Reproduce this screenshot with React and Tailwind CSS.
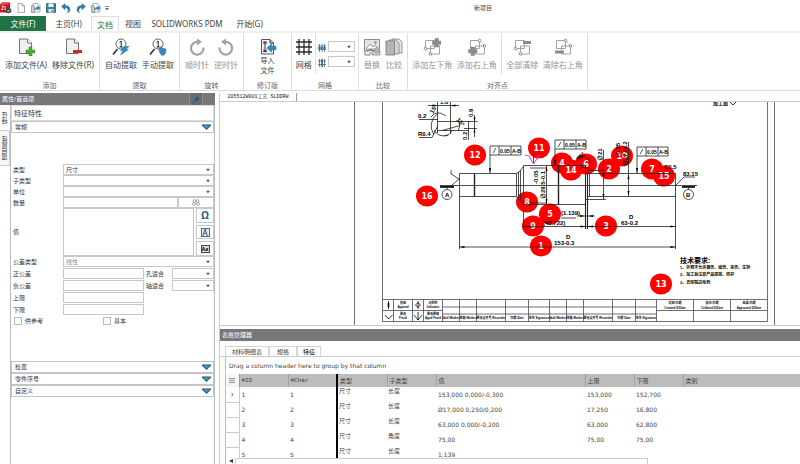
const quickIcons = [
  { name: 'SOLIDWORKS Inspection', icon: <LogoIcon /> },
  { name: '新建', icon: <NewIcon /> },
  { name: '打开', icon: <OpenIcon /> },
  { name: '保存', icon: <SaveIcon /> },
  { name: '撤消', icon: <UndoIcon /> },
  { name: '重做', icon: <UndoIcon flip /> },
  { name: '导出', icon: <OpenIcon /> },
]

const rows = [
  ['1', '1', '尺寸', '长度', '153,000 0,000/-0,300', '153,000', '152,700'],
  ['2', '2', '尺寸', '长度', 'Ø17,000 0,250/0,200', '17,250', '16,800'],
  ['3', '3', '尺寸', '长度', '63,000 0,000/-0,200', '63,000', '62,800'],
  ['4', '4', '尺寸', '角度', '75,00', '75,00', '75,00'],
  ['5', '5', '尺寸', '长度', '1,139', '', ''],
]

const balloons = [
  [12, 475, 155], [11, 539, 148], [4, 562, 163], [14, 571, 170], [6, 586, 164], [2, 609, 169],
  [10, 622, 156], [7, 652, 169], [15, 664, 176], [16, 427, 196], [8, 527, 202], [5, 550, 214],
  [9, 533, 226], [3, 606, 226], [1, 541, 246], [13, 661, 284],
]

function LogoIcon() {
  return (
    <svg viewBox="0 0 12 12" className="size-3">
      <path d="M0 2.500 2 .5h8v8l-2 2H0z" fill="#c4161c" />
      <path d="M0 2.500 2 .5h8L8 2.500z" fill="#e8474b" />
      <path d="M1.500 4h2L1.500 7.500h2M5 4v3.500h1.500" stroke="#fff" strokeWidth=".9" fill="none" />
      <circle cx="8.500" cy="8.500" r="2.800" fill="#444" />
      <path d="M7.200 8.500l1 1 1.600-2" stroke="#fff" strokeWidth=".8" fill="none" />
    </svg>
  )
}

function NewIcon() {
  return (
    <svg viewBox="0 0 12 12" className="size-3">
      <path d="M3 1.500h4l2.500 2.500v6.500H3zM7 1.500V4h2.500" fill="#fafafa" stroke="#8a8a8a" strokeWidth=".7" />
    </svg>
  )
}

function OpenIcon() {
  return (
    <svg viewBox="0 0 12 12" className="size-3">
      <path d="M3 1.500h5L10 3.500V10H3z" fill="#fff" stroke="#888" strokeWidth=".7" />
      <path d="M1.500 3.500h2l1 1v6h-3z" fill="#c9c9c9" stroke="#777" strokeWidth=".6" />
      <path d="M4.500 8.500c0-2.500 1.500-3.500 3-3.500V3l3 3-3 3V7C6.500 7 5.500 7.500 4.500 8.500z" fill="#3b87b0" />
    </svg>
  )
}

function SaveIcon() {
  return (
    <svg viewBox="0 0 12 12" className="size-3">
      <path d="M1.500 1.500h9v9h-9z" fill="#3c7fa6" stroke="#1f5576" strokeWidth=".7" />
      <path d="M3.500 1.500h5v3.500h-5z" fill="#fff" />
      <path d="M3.500 7h5v3.500h-5z" fill="#dfe8ee" />
      <path d="M6.500 8h1v2h-1z" fill="#1f5576" />
    </svg>
  )
}

function UndoIcon({ flip }) {
  return (
    <svg viewBox="0 0 12 12" className={flip ? 'size-3 -scale-x-100' : 'size-3'}>
      <path d="M1.500 4.500 5 1.500v2c3 0 5 1.200 5 4 0 1.500-1 2.700-2.500 3.200C8.200 9.500 8.400 8.500 8 7.500 7.500 6.200 6.500 5.800 5 5.800v2z" fill="#2f7ba8" stroke="#1f5e86" strokeWidth=".4" />
    </svg>
  )
}

function PageIcon({ remove }) {
  return (
    <svg viewBox="0 0 18 18" className="size-[18px]">
      <path d="M2.500 1h8l4 4v10.500h-12z" fill="#f0f0f0" stroke="#666" strokeWidth=".9" />
      <path d="M10.500 1v4h4" fill="#fff" stroke="#666" strokeWidth=".9" />
      {remove
        ? <path d="M9 12h9v3H9z" fill="#d9241c" />
        : <path d="M12 9h3v3h3v3h-3v3h-3v-3H9v-3h3z" fill="#4caf2f" stroke="#2e7d1c" strokeWidth=".5" />}
    </svg>
  )
}

function ExtractIcon({ manual }) {
  return (
    <svg viewBox="0 0 18 18" className="size-[18px]">
      <path d="M1 16.500 5.500 11" stroke="#333" strokeWidth="1.600" />
      <circle cx="9" cy="6" r="5" fill="#fff" stroke="#555" strokeWidth=".9" />
      <path d="M7.500 4.500 9.200 3v6M7.500 9h3.400" stroke="#222" strokeWidth="1" fill="none" />
      {manual
        ? <path d="M10 11.500c0-1 1-1 1.500 0V9c.3-1 1.300-1 1.400 0v1.500c.3-.8 1.300-.7 1.400.2.400-.6 1.300-.4 1.300.4.500-.5 1.400-.2 1.400.6 0 2.300-.6 4.800-2.500 5.500h-2C11 15.500 10 13.500 10 11.500z" fill="#2d8cbe" stroke="#1b5e86" strokeWidth=".4" />
        : <path d="M12 8.500h5l-3 3h2.500L8.500 17l2.500-4.200H8.500z" fill="#2d8cbe" stroke="#1b5e86" strokeWidth=".4" />}
    </svg>
  )
}

function RotateIcon({ ccw }) {
  return (
    <svg viewBox="0 0 18 18" className={ccw ? 'size-[18px] -scale-x-100' : 'size-[18px]'}>
      <path d="M15.500 9.500a6.300 6.300 0 1 1-5.500-5.500" fill="none" stroke="#a3a3a3" strokeWidth="2.200" />
      <path d="M9 .5v7l5-3.700z" fill="#a3a3a3" />
    </svg>
  )
}

function ImportIcon() {
  return (
    <svg viewBox="0 0 18 18" className="size-[18px]">
      <path d="M2.500 1.500h8.500l3.500 3.500v11h-12z" fill="#f2f2f2" stroke="#444" strokeWidth=".9" />
      <path d="M11 1.500V5h3.500M4 4h4M4 13.500h4M6 4v9.500M4.500 6 6 4.200 7.500 6M4.500 11.500 6 13.300l1.500-1.800" fill="none" stroke="#333" strokeWidth="1" />
      <path d="M8 10l4.500-4v2.300H17v3.400h-4.500V14z" fill="#2d8cbe" stroke="#1b5e86" strokeWidth=".5" />
    </svg>
  )
}

function GridIcon() {
  return (
    <svg viewBox="0 0 18 18" className="size-[18px]">
      <path d="M1 4h16M1 9h16M1 14h16M4 1v16M9 1v16M14 1v16" stroke="#2b2b2b" strokeWidth="1.300" />
    </svg>
  )
}

function SmallGridIcon({ vertical }) {
  return (
    <svg viewBox="0 0 8 8" className="size-2 shrink-0">
      <path d={vertical ? 'M3 0h2v8H3z' : 'M0 3h8v2H0z'} fill="#38b0e8" />
      <path d="M0 2h8M0 5.500h8M1.500 0v8M4 0v8M6.500 0v8" stroke="#44525c" strokeWidth=".7" />
    </svg>
  )
}

function ReplaceIcon() {
  return (
    <svg viewBox="0 0 18 18" className="size-[18px]">
      <path d="M1.500 1.500h15v11h-15z" fill="#e3e3e3" stroke="#8a8a8a" strokeWidth="1" />
      <path d="M3 11l4-5 3 3 2-2 3.500 4z" fill="#fff" stroke="#8a8a8a" strokeWidth=".8" />
      <circle cx="12.500" cy="4.500" r="1.200" fill="#8a8a8a" />
      <path d="M2 12v5h5v-3M4 14l4-3 3 2.500" fill="none" stroke="#777" strokeWidth="1" />
      <path d="M9 13h8v4H9z" fill="#c9c9c9" stroke="#888" strokeWidth=".8" />
      <circle cx="14" cy="12" r="2.500" fill="#bbb" stroke="#888" strokeWidth=".7" />
    </svg>
  )
}

function CompareIcon() {
  return (
    <svg viewBox="0 0 18 18" className="size-[18px]">
      <path d="M7 1h7l3 3v11H7z" fill="#e6e6e6" stroke="#8a8a8a" strokeWidth=".9" />
      <path d="M4 2h7l3 3v11H4z" fill="#d6d6d6" stroke="#8a8a8a" strokeWidth=".9" />
      <path d="M1 3h8.500v14H1z" fill="#b5b5b5" stroke="#808080" strokeWidth=".9" />
    </svg>
  )
}

function AlignIcon({ upper, clear }) {
  return (
    <svg viewBox="0 0 18 18" className="size-[18px]">
      <path d="M2.500 2.500h9v8h-9zM7.500 8h9v8h-9z" fill="none" stroke="#9a9a9a" strokeWidth=".9" />
      {upper
        ? <path d="M11.500 2.500 17 8" stroke="#9a9a9a" strokeWidth=".8" strokeDasharray="1.500 1" />
        : <path d="M2.500 10.500 7.500 16" stroke="#9a9a9a" strokeWidth=".8" strokeDasharray="1.500 1" />}
      <g fill="#fff" stroke="#808080" strokeWidth=".9">
        <circle cx={upper ? 11.5 : 2.5} cy={upper ? 2.5 : 10.5} r="1.300" />
        <circle cx={upper ? 16.5 : 7.5} cy={upper ? 8 : 16} r="1.300" />
      </g>
      {clear
        ? <path d={upper ? 'M1 12.500h9v3H1z' : 'M10 3h8v3h-8z'} fill="#8c8c8c" />
        : <path d={upper ? 'M3 9h3.500v2.500H9V15H6.500v2.500H3V15H.5v-3.500H3z' : 'M12 .5h3.500V3H18v3.500h-2.500V9H12V6.500H9.500V3H12z'} fill="#8c8c8c" stroke="#777" strokeWidth=".4" />}
    </svg>
  )
}

function Arrow() {
  return (
    <svg viewBox="0 0 4 3" className="pointer-events-none absolute top-1/2 right-1 h-[3px] w-1 -translate-y-1/2">
      <path d="M0 0h4L2 3z" fill="#555" />
    </svg>
  )
}

function Select({ label, id, options = [''], className = '', muted }) {
  return (
    <div className={`relative ${className}`}>
      <select id={id} aria-label={label} className={`block size-full appearance-none border border-[#c8c8c8] bg-white pl-[2px] text-[6px] leading-2 ${muted ? 'text-[#888]' : 'text-[#333]'}`}>
        {options.map(o => <option key={o}>{o}</option>)}
      </select>
      <Arrow />
    </div>
  )
}

function Group({ title, className, children }) {
  return (
    <section className={`flex shrink-0 flex-col border-r border-[#dedede] ${className}`}>
      <div className="flex min-h-0 flex-1 justify-evenly">{children}</div>
      <h2 className="h-2 text-center text-[7px] leading-2 text-[#666]">{title}</h2>
    </section>
  )
}

function Tool({ icon, children, disabled, lines }) {
  return (
    <button disabled={disabled} className={`flex flex-col items-center pt-[5px] whitespace-nowrap ${lines ? 'text-[7px]' : 'gap-1 text-[8px]'} leading-[10px] ${disabled ? 'text-[#949494]' : 'text-[#444]'}`}>
      {icon}
      {lines ? lines.map(l => <span key={l}>{l}</span>) : <span>{children}</span>}
    </button>
  )
}

function Ribbon() {
  return (
    <div className="flex h-[58px] shrink-0 border-b border-[#dcdcdc] bg-white">
      <Group title="添加" className="w-[100px]">
        <Tool icon={<PageIcon />}>添加文件(A)</Tool>
        <Tool icon={<PageIcon remove />}>移除文件(R)</Tool>
      </Group>
      <Group title="提取" className="w-20">
        <Tool icon={<ExtractIcon />}>自动提取</Tool>
        <Tool icon={<ExtractIcon manual />}>手动提取</Tool>
      </Group>
      <Group title="旋转" className="w-16">
        <Tool disabled icon={<RotateIcon />}>顺时针</Tool>
        <Tool disabled icon={<RotateIcon ccw />}>逆时针</Tool>
      </Group>
      <Group title="修订版" className="w-12">
        <Tool icon={<ImportIcon />} lines={['导入', '文件']} />
      </Group>
      <Group title="网格" className="w-[67px]">
        <Tool icon={<GridIcon />}>网格</Tool>
        <div className="mb-2 flex flex-col gap-1 border-l border-[#dedede] pt-2 pl-[2px]">
          <div className="flex items-end gap-[2px]">
            <SmallGridIcon />
            <Select label="行" className="h-[11px] w-[27px]" />
          </div>
          <div className="flex items-end gap-[2px]">
            <SmallGridIcon vertical />
            <Select label="列" className="h-[11px] w-[27px]" />
          </div>
        </div>
      </Group>
      <Group title="比较" className="w-[49px]">
        <Tool disabled icon={<ReplaceIcon />}>替换</Tool>
        <Tool disabled icon={<CompareIcon />}>比较</Tool>
      </Group>
      <Group title="对齐点" className="w-[180px]">
        <Tool disabled icon={<AlignIcon />}>添加左下角</Tool>
        <Tool disabled icon={<AlignIcon upper />}>添加右上角</Tool>
        <div className="mb-2 border-l border-[#dedede]" />
        <Tool disabled icon={<AlignIcon clear />}>全部清除</Tool>
        <Tool disabled icon={<AlignIcon upper clear />}>清除右上角</Tool>
      </Group>
    </div>
  )
}

function Section({ title }) {
  return (
    <button className="flex h-3 w-full items-center justify-between border border-[#c4c4c4] bg-white pr-[2px] pl-[3px] text-[6px] leading-2 text-[#333]">
      <span>{title}</span>
      <svg viewBox="0 0 9 6" className="h-[6px] w-[9px]">
        <path d="M0 .5h9v1L4.500 6 0 1.500z" fill="#1b5a80" />
        <path d="M1.500 1.500h6L4.500 4.500z" fill="#4a9cc4" />
      </svg>
    </button>
  )
}

function Field({ label, id, children, tall }) {
  return (
    <div className={`flex items-stretch ${tall ? 'h-12' : 'h-[11px]'}`}>
      <label htmlFor={id} className="flex w-[52px] shrink-0 items-center pl-[2px]">{label}</label>
      {children}
    </div>
  )
}

function PropertyPanel() {
  const box = 'border border-[#c8c8c8] bg-white'
  return (
    <aside className="flex w-[215px] shrink-0 flex-col text-[6px] leading-2 text-[#333]">
      <header className="flex h-3 shrink-0 items-center bg-[#777] pl-[2px] text-white">
        <h2 className="flex-1">属性/首选项</h2>
        <button aria-label="固定" className="flex h-full w-[14px] items-center justify-center border-x border-[#8c8c8c] bg-[#6b6b6b]">
          <svg viewBox="0 0 8 8" className="size-[7px]">
            <path d="M4.500 0 8 3.500l-1 .3-1.500 1.700-.3 1.500L1 2.800l1.500-.3L4.200 1z" fill="#1d5f94" />
            <path d="M3 5 .5 7.500" stroke="#173d5c" strokeWidth=".9" />
          </svg>
        </button>
        <span className="w-3" />
      </header>
      <div className="flex min-h-0 flex-1">
        <nav className="flex w-[10px] shrink-0 flex-col bg-white text-[6px]">
          <button className="flex h-[25px] items-center justify-center">
            <span className="rotate-180 [writing-mode:vertical-rl]">特征</span>
          </button>
          <button className="flex h-9 items-center justify-center border-y border-r border-[#ccc] bg-[#f7f7f7]">
            <span className="rotate-180 [writing-mode:vertical-rl]">项目属性</span>
          </button>
        </nav>
        <div className="flex-1 border-x border-[#bbb]">
          <h3 className="h-4 border border-[#ddd] pl-[2px] text-[7px] leading-4">特征特性</h3>
          <Section title="常规" />
          <form className="h-[228px] pt-[31px]">
            <Field label="类型" id="type"><Select id="type" options={['尺寸']} className="flex-1" /></Field>
            <Field label="子类型" id="subtype"><Select id="subtype" className="flex-1" /></Field>
            <Field label="单位" id="unit"><Select id="unit" className="flex-1" /></Field>
            <Field label="数量" id="qty">
              <input id="qty" className={`${box} min-w-0 flex-1`} />
              <button type="button" aria-label="数量选项" className={`${box} flex w-9 items-center justify-center`}>
                <svg viewBox="0 0 8 7" className="h-[7px] w-2" fill="none" stroke="#888" strokeWidth=".7">
                  <circle cx="2.500" cy="2" r="1.400" /><circle cx="5.500" cy="2" r="1.400" />
                  <circle cx="2" cy="5" r="1.500" /><circle cx="6" cy="5" r="1.500" />
                </svg>
              </button>
            </Field>
            <Field label="值" id="value" tall>
              <textarea id="value" className={`${box} min-w-0 flex-1 resize-none`} />
              <div className="flex w-5 flex-col gap-[2px] pl-[2px]">
                <button type="button" className={`${box} flex-1 text-[10px] leading-3 font-bold text-[#24597d]`}>Ω</button>
                <button type="button" className={`${box} flex flex-1 items-center justify-center`}>
                  <span className="size-[9px] border border-[#2d7399] bg-[#e3eff6] text-center text-[8px] leading-[7px] text-[#222]">A</span>
                </button>
                <button type="button" className={`${box} flex flex-1 items-center justify-center`}>
                  <span className="h-2 w-[9px] border border-[#444] bg-[#ddd] text-center text-[5px] leading-[6px] font-bold text-black">Aa</span>
                </button>
              </div>
            </Field>
            <Field label="公差类型" id="tol"><Select id="tol" options={['线性']} className="flex-1" muted /></Field>
            <div className="mt-[1px] flex flex-col gap-[1px]">
              <Field label="正公差" id="plus">
                <input id="plus" className={`${box} w-[81px]`} />
                <label htmlFor="hole" className="w-7 self-center pl-[2px]">孔适合</label>
                <Select id="hole" className="flex-1" />
              </Field>
              <Field label="负公差" id="minus">
                <input id="minus" className={`${box} w-[81px]`} />
                <label htmlFor="shaft" className="w-7 self-center pl-[2px]">轴适合</label>
                <Select id="shaft" className="flex-1" />
              </Field>
              <Field label="上限" id="upper"><input id="upper" className={`${box} w-[81px]`} /></Field>
              <Field label="下限" id="lower"><input id="lower" className={`${box} w-[81px]`} /></Field>
            </div>
            <div className="mt-[2px] flex pl-[3px]">
              <label className="flex w-[89px] items-center gap-[3px]">
                <input type="checkbox" className="size-2 appearance-none border border-[#bbb]" />供参考
              </label>
              <label className="flex items-center gap-[3px]">
                <input type="checkbox" className="size-2 appearance-none border border-[#bbb]" />基本
              </label>
            </div>
          </form>
          <Section title="检查" />
          <Section title="零件序号" />
          <Section title="自定义" />
        </div>
      </div>
    </aside>
  )
}

function Tolerance({ x, y, drop }) {
  return (
    <g>
      <path d={`M${x} ${drop}V${y}h31v9h-31M${x + 9} ${y}v9M${x + 21} ${y}v9M${x + 3} ${y + 7}l3-5`} />
      <path d={`M${x - 1} ${drop - 5}h2l-1 5z`} fill="#000" stroke="none" />
      <g fill="#000" stroke="none">
        <text x={x + 10} y={y + 7} fontSize="5">0.05</text>
        <text x={x + 22} y={y + 7} fontSize="5">A-B</text>
      </g>
    </g>
  )
}

function Drawing() {
  const signCells = [['标记 Marker', 451], ['处数 Marker', 468], ['更改文件号 Recorder', 491], ['日期 Date', 517], ['签名 Signature', 539], ['标记 Marker', 558], ['处数 Marker', 575], ['更改文件号 Recorder', 598], ['日期 Date', 624], ['签名 Signature', 646]]
  return (
    <svg viewBox="220 102 580 223" className="block w-full bg-white font-['Liberation_Sans_Narrow','Liberation_Sans','Noto_Sans_CJK_SC',sans-serif] font-bold">
      <g fill="#f00">
        {balloons.map(([n, x, y]) => <ellipse key={n} cx={x} cy={y} rx="11" ry="10.500" />)}
      </g>

      <g fill="#fff" fontSize="8" textAnchor="middle" className="font-['DejaVu_Sans',sans-serif]">
        {balloons.map(([n, x, y]) => <text key={n} x={x} y={y + 3}>{n}</text>)}
      </g>

      {/* sheet frame and title block */}
      <g fill="none" stroke="#4a4a58" strokeWidth=".8">
        <path d="M354.500 102v223M774.500 102v223M382.500 102v219.500h385V102M382.500 299.500h385" />
        <path d="M382.500 310.500h60M656.500 310.500h111M442.500 307h214M442.500 314h214" />
        <path d="M393.500 299.500v22M412.500 299.500v22M423.500 299.500v22M442.500 299.500v22M459.500 299.500v22M476.500 299.500v22M505.500 299.500v22M528.500 299.500v22M549.500 299.500v22M566.500 299.500v22M583.500 299.500v22M612.500 299.500v22M635.500 299.500v22M656.500 299.500v22M693.500 299.500v22M730.500 299.500v22" />
      </g>
      <g fill="none" stroke="#000" strokeWidth=".8">
        <path d="M388.500 301v8M385 315l3.500 4 4-4M418 301v8M415.500 305l2.500-2.500 2.500 2.500-2.500 2.500zM414 315l4 5 4-5M418 312v8" />
        <path d="M388.500 303v4" strokeWidth="1.600" />
      </g>
      <g fontSize="3" textAnchor="middle">
        <text x="403" y="304">借用</text><text x="403" y="308">Append</text>
        <text x="433" y="304">识别符</text><text x="433" y="308">Indicator</text>
        <text x="403" y="315">更改</text><text x="403" y="319">Fixed</text>
        <text x="433" y="315">更改更换</text><text x="433" y="319">Aged Fixed</text>
        <text x="675" y="304">绘制/日期</text><text x="675" y="309">Created D/Date</text>
        <text x="712" y="304">校对/日期</text><text x="712" y="309">Collated D/Date</text>
        <text x="749" y="304">批准/日期</text><text x="749" y="309">Approved D/Date</text>
        {signCells.map(([t, x]) => <text key={x} x={x} y="319">{t}</text>)}
      </g>

      {/* part outline */}
      <g fill="none" stroke="#222" strokeWidth=".8">
        <path d="M440 185.500h257" />
        <path d="M459.500 249V173.500h57l4-3 3.500-5h61.500v39h-62l-3.500-4-4-4h-56.500" />
        <path d="M516.500 173.500v23M518.500 172v26M520.500 170v30M523.500 165.500V229M588 173.500h87.500V249M588 196.500h87.500" />
        <path d="M474.500 173.500v23M558.500 165.500v39" strokeWidth="1.400" />
        <path d="M585.500 165.500V229M587.500 170v59" strokeWidth="1.100" />
        <path d="M589.500 173.500v23" />
        <path d="M546.500 166v38M530 203h17M530 168h16M603.500 150v49M586 199.500h20M589 170.500h15M628.500 142v54" />
        <path d="M459.500 247h216M523.500 226.500h152M577 216h18M561 218h15" />
        <path d="M451 170v4l8 5-8 7M440 186.500h14M447 187v2M682 186.500h13M688.500 187v2M676 185l8-8M684 177h11" />
        <circle cx="447" cy="194.500" r="5" /><circle cx="688.500" cy="194.500" r="5" />
        <path d="M533.500 150v13M576 160q9-9 15 3M579 169q6-4 12 1" />
        <Tolerance x={490} y={146} drop={173} />
        <Tolerance x={555} y={140} drop={165} />
        <Tolerance x={637} y={147} drop={173} />
      </g>
      <path d="M440 187h14M682 187h13" stroke="#000" strokeWidth="1.300" />
      <path d="M525 155l4 1 4.500 8 6-9" fill="none" stroke="#e23be2" />

      {/* groove detail */}
      <g fill="none" stroke="#222" strokeWidth=".8">
        <path d="M428 105.500h31M437.500 102v31M450.500 102v32M419 119.500h19M419 137.500h13l6-12M437.500 121.500h40M464 128.500h13M437.500 130.500h31M474.500 115v22M468.500 121v19M442 130.500l18-5" />
        <path d="M431 117q6-8 15-1M434 135q-7-12 3-21M434 130q4 8 14 5M459 121q2 5-1 10M444 136q6 0 8-6" />
      </g>

      <path fill="#000" d="M459.500 247l5-1v2zM675.500 247l-5-1v2zM523.500 226.500l5-1v2zM585.500 226.500l-5-1v2zM588 226.500l5-1v2zM675.500 226.500l-5-1v2zM546.500 166l-1 5h2zM546.500 204l-1-5h2zM603.500 171l-1 5h2zM603.500 199l-1-5h2zM628.500 174l-1 5h2zM628.500 196l-1-5h2zM437.500 105.500l-5-1v2zM450.500 105.500l5-1v2zM585 216l-5-1v2zM588 216l5-1v2zM474.500 121.500l-1-4h2zM474.500 128.500l-1 4h2z" />

      <g fontSize="6">
        <text x="440" y="104">1.0</text>
        <text x="418" y="118">0.2</text>
        <text x="418" y="136">R0.4</text>
        <text transform="translate(433 114) rotate(-60)">15°</text>
        <text transform="translate(456 120) rotate(50)">15°</text>
        <text transform="translate(473 117) rotate(-90)">0.9</text>
        <text transform="translate(467 140) rotate(-90)">0.2</text>
        <text transform="translate(545 199) rotate(-90)">∅29.5-0.1</text>
        <text transform="translate(538 184) rotate(-90)">-0.05</text>
        <text transform="translate(579 161) rotate(-45)">75°</text>
        <text transform="translate(602 161) rotate(-90)">∅21</text>
        <text transform="translate(627 166) rotate(-90)">∅17+0.2</text>
        <text transform="translate(620 158) rotate(-90)">+0.25</text>
        <text x="664" y="169">C0.5</text>
        <text x="683" y="176">83.15</text>
        <text x="561" y="215">(1.139)</text>
        <text x="543" y="225">(43.722)</text>
        <text x="621" y="225">63-0.2</text><text x="629" y="219">D</text>
        <text x="554" y="245">153-0.3</text><text x="566" y="239">D</text>
        <text x="445" y="197">A</text><text x="686" y="197">B</text>
      </g>
      <text x="713" y="105" fontSize="5">加工面</text>
      <path d="M730 102l3 3 3-3" fill="none" stroke="#333" />
      <text x="680" y="263" fontSize="7">技术要求:</text>
      <g fontSize="4">
        <text x="680" y="269">1、外观不允许烟伤、磕伤、夹伤、生锈</text>
        <text x="680" y="276">2、加工后注意产品摆放、防护</text>
        <text x="680" y="284">3、去除锐边毛刺</text>
      </g>
    </svg>
  )
}

function TableManager() {
  return (
    <section className="mt-[3px] flex min-h-0 flex-1 flex-col text-[6px] leading-2 text-[#444]">
      <h2 className="h-3 shrink-0 bg-[#777] pl-[2px] leading-3 text-white">表格管理器</h2>
      <div className="flex shrink-0 border-b border-[#ccc] pt-[5px] pl-[5px]">
        <button className="h-[10px] w-11 border border-b-0 border-[#d5d5d5]">材料明细表</button>
        <button className="h-[10px] w-7 border border-b-0 border-[#d5d5d5]">规格</button>
        <button className="h-[10px] w-6 border border-b-0 border-[#d5d5d5] text-black">特征</button>
      </div>
      <div className="ml-[5px] flex min-h-0 flex-1 flex-col border-l border-[#bbb]">
        <p className="h-[17px] shrink-0 pl-[3px] font-['DejaVu_Sans',sans-serif] leading-[17px]">Drag a column header here to group by that column</p>
        <div className="min-h-0 flex-1 overflow-hidden">
          <table className="w-full table-fixed border-collapse text-left">
            <colgroup>
              <col className="w-[13px]" />
              <col className="w-[49px]" />
              <col className="w-[49px]" />
              <col className="w-[50px]" />
              <col className="w-[49px]" />
              <col className="w-[149px]" />
              <col className="w-[49px]" />
              <col className="w-[49px]" />
              <col />
            </colgroup>
            <thead>
              <tr className="h-[13px] bg-[#bcbcbc]">
                <th className="border-r border-[#999] bg-[#f5f5f5]">
                  <svg viewBox="0 0 6 6" className="mx-auto size-[6px]"><path d="M0 .5h6M0 2.500h6M0 4.500h6" stroke="#777" strokeWidth=".8" /></svg>
                </th>
                {['#ID', '#Char', '类型', '子类型', '值', '上限', '下限', '类别'].map((h, i) => (
                  <th key={h} className={`pl-[2px] font-normal ${i === 1 ? 'border-r-2 border-black' : i < 7 ? 'border-r border-[#a0a0a0]' : ''} ${i < 2 ? "font-['Liberation_Mono',monospace]" : ''}`}>{h}</th>
                ))}
              </tr>
            </thead>
            <tbody>
              {rows.map((row, r) => (
                <tr key={row[0]} className="h-[15px]">
                  <td className="border-r border-b border-[#ccc] text-center text-[8px]">{r === 0 ? '›' : ''}</td>
                  {row.map((cell, i) => (
                    <td key={i} className={`${i === 2 || i === 3 ? 'pl-[1px] align-top' : "pl-[2px] align-middle font-['DejaVu_Sans',sans-serif]"} ${i === 1 ? 'border-r-2 border-black' : ''}`}>{cell}</td>
                  ))}
                  <td />
                </tr>
              ))}
            </tbody>
          </table>
        </div>
        <div className="flex h-[6px] shrink-0">
          <button aria-label="向左滚动" className="flex w-[9px] items-center justify-center">
            <svg viewBox="0 0 4 4" className="size-1"><path d="M4 0v4L0 2z" fill="#333" /></svg>
          </button>
          <div className="w-[72%] border border-b-0 border-[#ccc]" />
        </div>
      </div>
    </section>
  )
}

export default function App() {
  return (
    <div className="flex h-screen flex-col overflow-hidden bg-white font-['Noto_Sans','Noto_Sans_CJK_SC',sans-serif] text-[#444]">
      <header className="flex h-4 shrink-0 items-center">
        <div className="flex flex-1 items-center gap-[3px]">
          {quickIcons.map(q => <button key={q.name} aria-label={q.name}>{q.icon}</button>)}
          <button aria-label="自定义快速访问">
            <svg viewBox="0 0 4 5" className="h-[5px] w-1"><path d="M0 .5h4" stroke="#666" strokeWidth=".8" /><path d="M0 2h4L2 4.500z" fill="#666" /></svg>
          </button>
        </div>
        <h1 className="w-[326px] text-[6px] leading-3">新项目</h1>
      </header>

      <nav className="flex h-[17px] shrink-0 items-stretch border-b-2 border-[#efefef] text-[8px] leading-4">
        <button className="w-[46px] bg-[#217346] text-white">文件(F)</button>
        <button className="w-[45px]">主页(H)</button>
        <button className="w-7 border border-b-0 border-[#ddd] bg-white text-[#217346]">文档</button>
        <button className="w-7">视图</button>
        <button className="w-20">SOLIDWORKS PDM</button>
        <button className="w-[45px]">开始(G)</button>
      </nav>

      <Ribbon />

      <main className="mt-[2px] flex min-h-0 flex-1">
        <PropertyPanel />
        <div className="ml-1 flex min-w-0 flex-1 flex-col border-l border-[#ccc]">
          <div className="flex h-[9px] shrink-0 border-b border-[#ccc]">
            <button className="w-[77px] border-r border-[#999] text-[5px] leading-2 text-[#222] font-['Liberation_Mono','Noto_Sans_CJK_SC',monospace]">205512W001工艺 SLDDRW</button>
          </div>
          <div className="border-b border-[#ccc]"><Drawing /></div>
          <TableManager />
        </div>
      </main>
    </div>
  )
}
